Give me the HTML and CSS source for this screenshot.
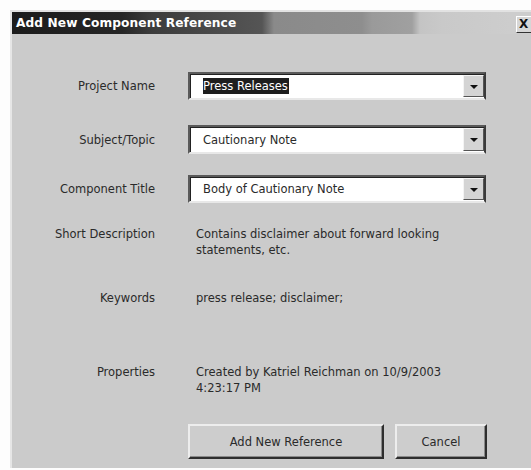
FILE: index.html
```html
<!DOCTYPE html>
<html lang="en">
<head>
<meta charset="utf-8">
<title>Add New Component Reference</title>
<link rel="stylesheet" href="styles.css">
</head>
<body>
<div class="window">
  <div class="titlebar">
    <span class="title">Add New Component Reference</span>
    <span class="close">X</span>
  </div>
  <div class="content">
    <div class="row row-first">
      <span class="label">Project Name</span>
      <div class="combo">
        <span class="combo-text"><span class="selected">Press Releases</span></span>
        <span class="combo-btn"><span class="arrow"></span></span>
      </div>
    </div>
    <div class="row row-second">
      <span class="label">Subject/Topic</span>
      <div class="combo">
        <span class="combo-text">Cautionary Note</span>
        <span class="combo-btn"><span class="arrow"></span></span>
      </div>
    </div>
    <div class="row row-third">
      <span class="label">Component Title</span>
      <div class="combo">
        <span class="combo-text">Body of Cautionary Note</span>
        <span class="combo-btn"><span class="arrow"></span></span>
      </div>
    </div>
    <div class="row row-text row-desc">
      <span class="label">Short Description</span>
      <p class="value">Contains disclaimer about forward looking statements, etc.</p>
    </div>
    <div class="row row-text row-keywords">
      <span class="label">Keywords</span>
      <p class="value">press release; disclaimer;</p>
    </div>
    <div class="row row-text row-props">
      <span class="label">Properties</span>
      <p class="value">Created by Katriel Reichman on 10/9/2003<br>4:23:17 PM</p>
    </div>
    <div class="actions">
      <button class="btn btn-add" type="button">Add New Reference</button>
      <button class="btn btn-cancel" type="button">Cancel</button>
    </div>
  </div>
</div>
</body>
</html>
```
FILE: styles.css
```css
html, body {
  margin: 0;
  padding: 0;
  background: #fdfdfd;
  overflow: hidden;
  width: 531px;
  height: 470px;
}

body {
  font-family: "DejaVu Sans", Verdana, sans-serif;
  font-size: 11.5px;
  color: #2a2a2a;
}

.window {
  margin: 10px 0 0 10px;
  width: 521px;
  height: 458px;
  background: #cbcbcb;
  border-top: 2px solid #e2e2e2;
  border-left: 2px solid #e6e6e6;
  box-sizing: border-box;
  display: flex;
  flex-direction: column;
}

/* caption bar with the classic dark-to-light fade */
.titlebar {
  height: 22px;
  flex: none;
  display: flex;
  align-items: center;
  padding-left: 4px;
  background: linear-gradient(90deg,
    #1c1c1c 0px, #262626 110px, #3c3c3c 140px, #555 250px,
    #8a8a8a 262px, #8e8e8e 350px, #9a9a9a 360px, #a0a0a0 400px,
    #c4c4c4 408px, #c9c9c9 430px, #cdcdcd 500px);
}

.title {
  color: #fff;
  font-weight: bold;
  font-size: 12.2px;
  letter-spacing: 0.1px;
  flex: 1;
}

.close {
  width: 12px;
  height: 15px;
  margin-top: 2px;
  background: #d6d6d6;
  border-top: 1px solid #fff;
  border-left: 1px solid #fff;
  border-bottom: 1px solid #333;
  font-weight: bold;
  font-size: 12px;
  line-height: 15px;
  padding-left: 2px;
  color: #111;
  overflow: hidden;
}

.content {
  flex: 1;
  display: flex;
  flex-direction: column;
}

.row {
  display: flex;
  align-items: center;
  gap: 33px;
}

.row-text {
  align-items: flex-start;
}

.row-first { margin-top: 38px; }
.row-second { margin-top: 25px; }
.row-third { margin-top: 21px; }
.row-desc { margin-top: 23px; height: 64px; }
.row-keywords { margin-top: 0; height: 74px; }
.row-props { margin-top: 0; }

.label {
  width: 143px;
  flex: none;
  text-align: right;
  line-height: 16px;
}

.value {
  margin: 0;
  width: 290px;
  line-height: 16px;
  padding-left: 8px;
}

/* sunken drop-down list */
.combo {
  width: 298px;
  height: 28px;
  box-sizing: border-box;
  background: #fff;
  border-top: 2px solid #5a5a5a;
  border-left: 2px solid #5a5a5a;
  border-right: 2px solid #3a3a3a;
  border-bottom: 2px solid #e8e8e8;
  box-shadow: inset 1px 1px 0 #222;
  display: flex;
  align-items: stretch;
}

.row-second .combo { height: 29px; }

.combo-text {
  flex: 1;
  padding-left: 13px;
  display: flex;
  align-items: center;
}

.selected {
  background: #1e1e1e;
  color: #fff;
  padding: 1px 1px 1px 0;
}

.combo-btn {
  width: 19px;
  flex: none;
  margin: 1px 0 1px 0;
  background: #d4d4d4;
  border-top: 1px solid #f4f4f4;
  border-left: 1px solid #f4f4f4;
  border-right: 1px solid #555;
  border-bottom: 1px solid #555;
  display: flex;
  align-items: center;
  justify-content: center;
}

.arrow {
  width: 0;
  height: 0;
  border-left: 4px solid transparent;
  border-right: 4px solid transparent;
  border-top: 4px solid #111;
  margin-top: 1px;
}

.actions {
  display: flex;
  gap: 11px;
  margin-top: 28px;
  padding-left: 176px;
}

/* raised push buttons */
.btn {
  height: 35px;
  margin: 0;
  font-family: inherit;
  font-size: 11.5px;
  color: #2a2a2a;
  background: #cdcdcd;
  border-top: 2px solid #ededed;
  border-left: 2px solid #ededed;
  border-right: 2px solid #2e2e2e;
  border-bottom: 2px solid #2e2e2e;
  box-shadow: inset -1px -1px 0 #8a8a8a;
  padding: 0;
}

.btn-add { width: 196px; }
.btn-cancel { width: 92px; }
```
